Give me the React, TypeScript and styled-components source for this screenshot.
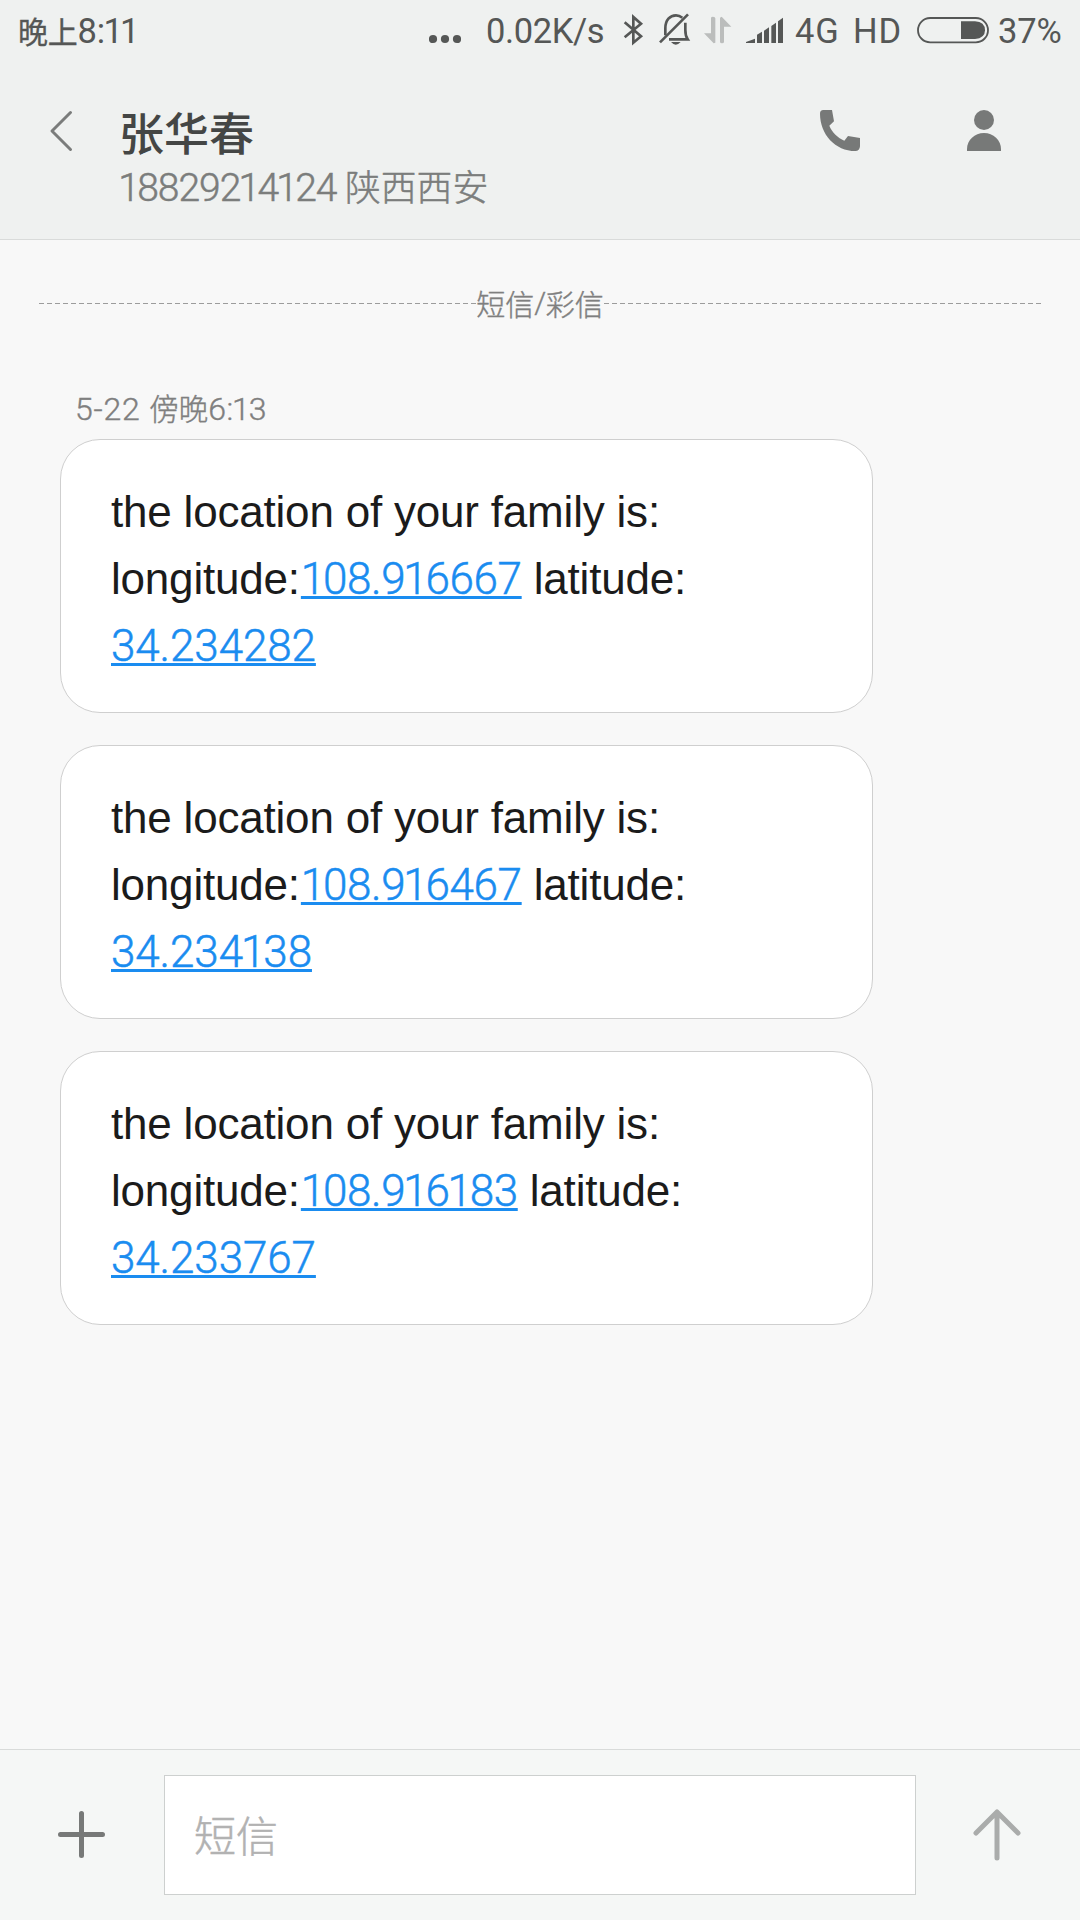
import React from 'react';
import styled, { createGlobalStyle } from 'styled-components';

const GlobalStyle = createGlobalStyle`
  * { box-sizing: border-box; }
  body { margin: 0; background: #f8f8f8; }
  svg { display: block; flex: none; }
`;

const latin = `Roboto, "Noto Sans CJK SC", sans-serif`;
const han = `"Noto Sans CJK SC", sans-serif`;

const Screen = styled.div`
  display: flex;
  flex-direction: column;
  width: 1080px;
  height: 1920px;
  overflow: hidden;
  background: #f8f8f8;
  font-family: ${latin};
`;

const Header = styled.header`
  display: flex;
  flex-direction: column;
  height: 240px;
  background: #eff1f0;
  border-bottom: 1px solid #d9dbda;
`;

const StatusBar = styled.div`
  display: flex;
  align-items: center;
  height: 62px;
  padding: 0 18px;
  color: #555756;
`;

const Clock = styled.div`
  display: flex;
  align-items: baseline;
  margin-right: auto;
`;

const Text = styled.span<{ $size: number; $weight?: number; $spacing?: number; $stroke?: number }>`
  font-family: ${latin};
  font-size: ${(p) => p.$size}px;
  font-weight: ${(p) => p.$weight ?? 400};
  letter-spacing: ${(p) => p.$spacing ?? 0}px;
  line-height: 1;
  white-space: pre;
  -webkit-text-stroke: ${(p) => p.$stroke ?? 0}px currentColor;
`;

const Han = styled(Text)`
  font-family: ${han};
`;

const Slot = styled.div<{ $width: number; $gap: number }>`
  display: flex;
  flex: none;
  width: ${(p) => p.$width}px;
  margin-left: ${(p) => p.$gap}px;
  white-space: nowrap;
`;

const TextSlot = styled(Slot)`
  padding-top: 1px;
`;

const NavBar = styled.div`
  display: flex;
  align-items: flex-start;
  height: 177px;
  padding: 0 79px 0 49px;
`;

const IconButton = styled.div<{ $top: number }>`
  flex: none;
  padding-top: ${(p) => p.$top}px;
`;

const Contact = styled.div`
  display: flex;
  flex-direction: column;
  flex: 1;
  padding: 46px 0 0 46px;
`;

const Name = styled.div`
  height: 60px;
  color: #444645;
  font-family: ${han};
  font-size: 45px;
  font-weight: 500;
  line-height: 48px;
`;

const Phone = styled.div`
  display: flex;
  align-items: baseline;
  padding-left: 1px;
  line-height: 50px;
  color: #7b7d7c;
`;

const Actions = styled.div`
  display: flex;
  gap: 107px;
`;

const One = styled.span`
  margin: 0 -0.045em;
`;

const Thread = styled.main`
  display: flex;
  flex-direction: column;
  flex: 1;
  padding: 0 39px;
`;

const Divider = styled.div`
  display: flex;
  align-items: center;
  height: 42px;
  margin-top: 42px;
  color: #7f7f7f;
`;

const Dashes = styled.div`
  flex: 1;
  height: 1px;
  background: repeating-linear-gradient(to right, #9c9c9c 0 5px, transparent 5px 8px);
`;

const DateLine = styled.div`
  display: flex;
  align-items: baseline;
  height: 42px;
  margin: 69px 0 0 36px;
  line-height: 42px;
  color: #7f7f7f;
`;

const Bubbles = styled.div`
  display: flex;
  flex-direction: column;
  gap: 32px;
  margin: 4px 0 0 21px;
`;

const Bubble = styled.div`
  width: 813px;
  height: 274px;
  padding: 38px 50px 0;
  border: 1px solid #cfcfcf;
  border-radius: 40px;
  background: #fff;
  color: #1b1b1b;
  font-family: "Liberation Sans", Arial, sans-serif;
  font-size: 44px;
  letter-spacing: -0.2px;
`;

const Line = styled.div`
  height: 67px;
  line-height: 67px;
  white-space: pre;
`;

const CoordLink = styled.span<{ $lead?: number; $spacing: number }>`
  margin-left: ${(p) => p.$lead ?? 0}px;
  font-family: ${latin};
  font-weight: 300;
  font-size: 44px;
  line-height: 1;
  letter-spacing: ${(p) => p.$spacing}px;
  color: #1a8cf0;
  text-decoration: underline;
  text-decoration-thickness: 3px;
  text-underline-offset: 2px;
  text-decoration-skip-ink: none;
  -webkit-text-stroke: 0.5px currentColor;
`;

const Composer = styled.footer`
  display: flex;
  align-items: flex-start;
  height: 171px;
  padding: 0 57px;
  background: #f5f7f6;
  border-top: 1px solid #d9dbda;
`;

const Field = styled.div`
  flex: none;
  width: 752px;
  height: 120px;
  margin: 25px 56px 0 58px;
  padding-left: 29px;
  border: 1px solid #cdd0cf;
  background: #fff;
  color: #b2b2b2;
  font-family: ${han};
  font-size: 42px;
  font-weight: 300;
  line-height: 116px;
  -webkit-text-stroke: 0.5px currentColor;
`;

const Digits = ({ value }: { value: string }) => (
  <>
    {value.split(/(1)/).map((part, i) => (part === '1' ? <One key={i}>1</One> : part))}
  </>
);

const messages = [
  { longitude: '108.916667', latitude: '34.234282' },
  { longitude: '108.916467', latitude: '34.234138' },
  { longitude: '108.916183', latitude: '34.233767' },
];

const StatusIcons = () => (
  <>
    <Slot $width={32} $gap={0}>
      <svg width="32" height="62" viewBox="0 0 32 62" fill="#555756">
        <circle cx="4" cy="39" r="4.1" />
        <circle cx="16" cy="39" r="4.1" />
        <circle cx="28" cy="39" r="4.1" />
      </svg>
    </Slot>
    <TextSlot $width={119} $gap={25}>
      <Text $size={34.5} $spacing={-0.4}>0.02K/s</Text>
    </TextSlot>
    <Slot $width={160} $gap={18}>
      <svg width="160" height="62" viewBox="0 0 480 186" fill="none" stroke="#555756" strokeWidth="8">
        <path d="M5 67 L54 109 L31 128 V51 L54 71 L5 112" />
        <path d="M111 127 L195 43" />
        <path d="M127 106 V85 C127 60 141 46 159 46 C167 46 173 49 178 53" />
        <path d="M187 68 V90 Q187 108 194 118 H138" />
        <path d="M144 126 H173 Q158 142 144 126Z" fill="#555756" stroke="none" />
        <g fill="#bbbdbc" stroke="none">
          <path d="M264 54 Q264 50 270 50 Q277 50 277 55 V128 L272 130 L243 100 H264Z" />
          <path d="M291 53 L296 50 L325 80 H303 V125 Q303 130 297 130 Q291 130 291 125Z" />
        </g>
        <g fill="#555756" stroke="none">
          <path d="M369 129 V126 L396 116 V129Z" />
          <path d="M402 129 V104 L417 95 V129Z" />
          <path d="M423 129 V92 L438 82 V129Z" />
          <path d="M445 129 V78 L459 68 V129Z" />
          <path d="M465 129 V64 L480 53 V129Z" />
        </g>
      </svg>
    </Slot>
    <TextSlot $width={48} $gap={12}>
      <Text $size={34.5} $spacing={0.8}>4G</Text>
    </TextSlot>
    <TextSlot $width={49} $gap={10}>
      <Text $size={34.5} $spacing={0.8}>HD</Text>
    </TextSlot>
    <Slot $width={72} $gap={15}>
      <svg width="72" height="62" viewBox="0 0 216 186">
        <rect x="3" y="54" width="210" height="73" rx="36.5" fill="none" stroke="#555756" strokeWidth="5.5" />
        <path d="M132 64 H174 Q204 66 204 91 Q204 115 174 117 H132Z" fill="#555756" />
      </svg>
    </Slot>
    <TextSlot $width={64} $gap={9}>
      <Text $size={34.5} $spacing={-0.2}>37%</Text>
    </TextSlot>
  </>
);

export default function App() {
  return (
    <Screen>
      <GlobalStyle />
      <Header>
        <StatusBar>
          <Clock>
            <Han $size={30} $spacing={-0.3} $stroke={0.3}>晚上</Han>
            <Text $size={34.5}><Digits value="8:11" /></Text>
          </Clock>
          <StatusIcons />
        </StatusBar>
        <NavBar>
          <IconButton $top={48}>
            <svg width="24" height="42" viewBox="0 0 24 42" fill="none" stroke="#7a7c7b" strokeWidth="3" strokeLinecap="round">
              <path d="M21.5 2.5 L3 21 L21.5 39.5" strokeLinejoin="round" />
            </svg>
          </IconButton>
          <Contact>
            <Name>张华春</Name>
            <Phone>
              <Text $size={39} $weight={300} $spacing={-1} $stroke={0.5}><Digits value="18829214124" /> </Text>
              <Han $size={35.8} $weight={300} $stroke={0.5}>陕西西安</Han>
            </Phone>
          </Contact>
          <Actions>
            <IconButton $top={48}>
              <svg width="40" height="41" viewBox="180 90 120 123" fill="#777978">
                <path d="M190 90 H216 L222 124 L208 137 C216 157 234 174 253 182 L264 168 L300 174 V199 Q299 213 286 213 C226 213 180 163 180 101 Q180 90 190 90Z" />
              </svg>
            </IconButton>
            <IconButton $top={48}>
              <svg width="34" height="41" viewBox="621 90 102 123" fill="#777978">
                <circle cx="672" cy="120" r="30" />
                <path d="M621 213 V207 C621 180 644 159 672 159 S723 180 723 207 V213Z" />
              </svg>
            </IconButton>
          </Actions>
        </NavBar>
      </Header>
      <Thread>
        <Divider>
          <Dashes />
          <Han $size={29} $weight={300} $stroke={0.4}>短信</Han>
          <Text $size={30} $weight={300} $spacing={-0.5} $stroke={0.4}>/</Text>
          <Han $size={29} $weight={300} $stroke={0.4}>彩信</Han>
          <Dashes />
        </Divider>
        <DateLine>
          <Text $size={32} $weight={300} $spacing={0.8} $stroke={0.4}>5-22 </Text>
          <Han $size={29.5} $weight={300} $stroke={0.4}>傍晚</Han>
          <Text $size={32} $weight={300} $spacing={0.4} $stroke={0.4}><Digits value="6:13" /></Text>
        </DateLine>
        <Bubbles>
          {messages.map((m) => (
            <Bubble key={m.longitude}>
              <Line>the location of your family is:</Line>
              <Line>
                longitude:<CoordLink $lead={3} $spacing={-0.35}><Digits value={m.longitude} /></CoordLink> latitude:
              </Line>
              <Line>
                <CoordLink $spacing={-0.1}><Digits value={m.latitude} /></CoordLink>
              </Line>
            </Bubble>
          ))}
        </Bubbles>
      </Thread>
      <Composer>
        <IconButton $top={60}>
          <svg width="49" height="49" viewBox="0 0 49 49" stroke="#777978" strokeWidth="5" strokeLinecap="round">
            <path d="M24.5 3.5 V45.5 M3.5 24.5 H45.5" />
          </svg>
        </IconButton>
        <Field>短信</Field>
        <IconButton $top={58}>
          <svg width="50" height="54" viewBox="0 0 50 54" fill="none" stroke="#aaacab" strokeWidth="5" strokeLinecap="round" strokeLinejoin="round">
            <path d="M25 50 V4 M4 25 L25 4 L46 25" />
          </svg>
        </IconButton>
      </Composer>
    </Screen>
  );
}
